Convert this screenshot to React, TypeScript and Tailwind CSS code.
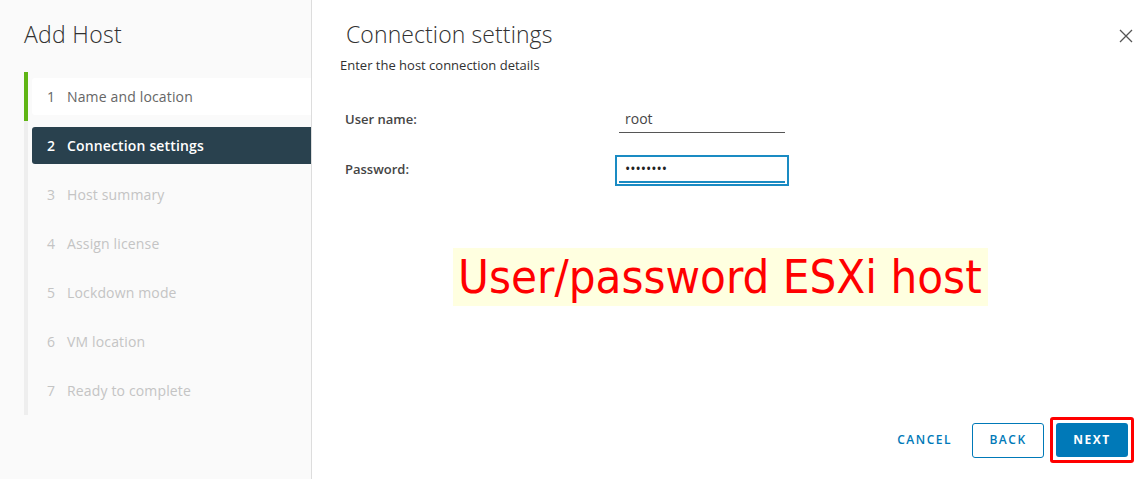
import React from "react";

const steps = [
  "Name and location",
  "Connection settings",
  "Host summary",
  "Assign license",
  "Lockdown mode",
  "VM location",
  "Ready to complete",
];

export default function App() {
  return (
    <div
      className="flex h-[479px] w-[1148px] bg-white text-[#313131] overflow-hidden"
      style={{ fontFamily: '"Open Sans", "Noto Sans", sans-serif' }}
    >
      <aside className="w-[312px] shrink-0 bg-[#fafafa] border-r border-[#dddddd] flex flex-col">
        <div className="pl-6 pt-[19px] h-[72px]">
          <h1 className="text-[23px] tracking-[0.3px] font-light leading-[30px] text-[#313131]">Add Host</h1>
        </div>
        <div className="ml-6 flex flex-col">
          {steps.map((s, i) => {
            const done = i === 0;
            const active = i === 1;
            return (
              <div
                key={s}
                className={`border-l-4 py-[6px] ${done ? "border-[#60b515]" : "border-[#eeeeee]"}`}
              >
                <div
                  className={`ml-1 h-[37px] flex items-center rounded-l-[3px] text-[14px] ${
                    active
                      ? "bg-[#29414e] text-white font-semibold"
                      : done
                      ? "bg-white text-[#666666]"
                      : "text-[#c4c4c4]"
                  }`}
                >
                  <span className="w-[35px] pl-[15px]">{i + 1}</span>
                  <span className="tracking-[0.15px]">{s}</span>
                </div>
              </div>
            );
          })}
        </div>
      </aside>

      <main className="flex-1 flex flex-col pl-[28px] pr-[20px] relative">
        <div className="flex items-start justify-between pt-[19px]">
          <h2 className="ml-[6px] text-[23px] tracking-[0.1px] font-light leading-[30px] text-[#313131]">
            Connection settings
          </h2>
          <button className="mt-[9px] mr-[-6px] text-[#666666]" aria-label="close">
            <svg width="16" height="16" viewBox="0 0 16 16">
              <path d="M2 2 L14 14 M14 2 L2 14" stroke="#555" strokeWidth="1.3" />
            </svg>
          </button>
        </div>
        <p className="text-[13px] leading-[18px] mt-[7px] text-[#313131]">
          Enter the host connection details
        </p>

        <div className="mt-[26px] flex flex-col">
          <div className="flex items-center h-[40px]">
            <label className="ml-[5px] w-[274px] text-[13px] font-semibold text-[#454545]">User name:</label>
            <div className="w-[166px] border-b border-[#565656] h-[26px] pl-[6px] text-[14px] leading-[24px] text-[#454545]">
              root
            </div>
          </div>
          <div className="flex items-center h-[50px] mt-[5px]">
            <label className="ml-[5px] w-[270px] text-[13px] font-semibold text-[#454545]">Password:</label>
            <div className="w-[174px] h-[31px] border-2 border-[#1a8bc3] px-[2px] pt-[2px]">
              <div className="h-[24px] border-b-2 border-[#1a8bc3] pl-[6px] text-[14px] leading-[20px] text-[#222]">
                ••••••••
              </div>
            </div>
          </div>
        </div>

        <div className="mt-[53px] ml-[113px] w-[535px] h-[58px] bg-[#ffffe0] flex items-center">
          <span
            className="pl-[5px] text-[47px] leading-[58px] text-[#ff0000]"
            style={{ fontFamily: '"DejaVu Sans Condensed", "DejaVu Sans", sans-serif' }}
          >
            User/password ESXi host
          </span>
        </div>

        <div className="mt-auto mb-[16px] flex items-center justify-end">
          <button className="text-[12px] font-semibold tracking-[1.5px] text-[#0079b8] mr-[20px]">
            CANCEL
          </button>
          <button className="w-[72px] h-[35px] border border-[#0079b8] rounded-[3px] text-[12px] font-semibold tracking-[1.5px] text-[#0079b8] mr-[6px]">
            BACK
          </button>
          <div className="border-[3px] border-[#ff0000] rounded-[3px] p-[3px] mr-[-6px]">
            <button className="w-[72px] h-[34px] bg-[#0079b8] rounded-[3px] text-[12px] font-bold tracking-[1.5px] text-white block">
              NEXT
            </button>
          </div>
        </div>
      </main>
    </div>
  );
}
